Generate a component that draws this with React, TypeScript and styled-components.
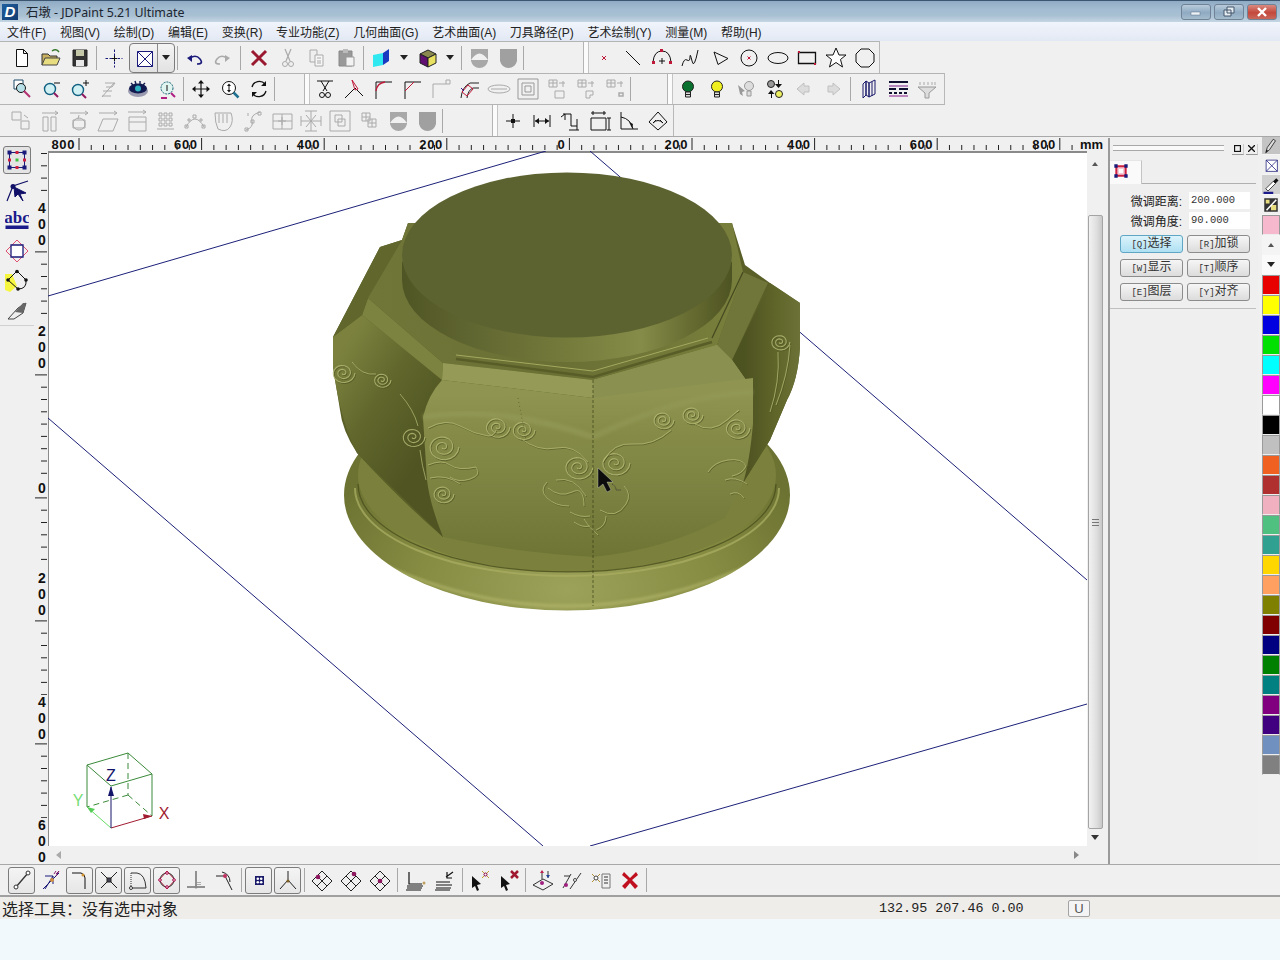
import React from 'react';
import styled, { createGlobalStyle, css } from 'styled-components';

const Global = createGlobalStyle`
  html, body { margin: 0; padding: 0; background: #f2f9fd; }
  #root { width: 1280px; height: 960px; overflow: hidden; }
`;
const UI = `"Liberation Sans", "Noto Sans CJK SC", sans-serif`;
const MONO = `"Liberation Mono", "Noto Sans CJK SC", monospace`;

const Page = styled.div`
  width: 1280px; height: 960px; display: flex; flex-direction: column; font-family: ${UI}; color: #222; background: #f2f9fd;
`;
const TitleBar = styled.div`
  height: 22px; box-sizing: border-box; border-top: 1px solid #3c5672; display: flex; align-items: center; flex: none;
  background: linear-gradient(#8fabc4 0%, #a3bcd1 40%, #a9c0d3 70%, #c4d6e3 100%);
`;
const Logo = styled.span`
  width: 16px; height: 16px; margin-left: 2px; background: linear-gradient(135deg, #1f5f9e, #123a70); color: #fff;
  font: italic bold 15px/16px "Liberation Sans", sans-serif; text-align: center; flex: none;
`;
const TitleText = styled.span`
  margin-left: 8px; font: 12.4px "Noto Sans", "Noto Sans CJK SC", sans-serif; color: #1c2530;
`;
const WinButtons = styled.div`
  margin-left: auto; margin-right: 3px; display: flex; gap: 3px;
`;
const WinBtn = styled.div<{ $close?: boolean }>`
  width: 30px; height: 16px; border: 1px solid #6f8296; border-radius: 3px; box-sizing: border-box;
  display: flex; align-items: center; justify-content: center;
  background: ${p => p.$close ? 'linear-gradient(#d98a80, #c4483c 55%, #c9685c)' : 'linear-gradient(#b8cbdb, #8faac2 55%, #a5bccd)'};
`;
const MenuBar = styled.div`
  height: 19px; flex: none; display: flex; align-items: center; padding-left: 7px; gap: 13.7px; font-size: 12px; color: #222;
  background: linear-gradient(#f0f4fb, #e3e9f4);
`;
const MenuItem = styled.span` white-space: nowrap; `;

const Toolbar = styled.div<{ $width: number; $h: number; $top?: boolean; $bottom?: boolean; $pad?: number }>`
  width: ${p => p.$width}px; height: ${p => p.$h}px; box-sizing: border-box; flex: none; display: flex; align-items: center;
  padding-left: ${p => p.$pad ?? 7}px; background: #f0f0f0;
  border-right: 1px solid #b8b8b8;
  ${p => p.$top && 'border-top: 1px solid #b4b4b4;'}
  ${p => p.$bottom && 'border-bottom: 1px solid #b4b4b4;'}
`;
const ToolbarTrack = styled.div` background: #f0f0f0; flex: none; `;
const ToolBtn = styled.div<{ $on?: boolean; $w?: number }>`
  width: ${p => (p.$w ?? 29) - 2}px; height: 27px; margin: 0 1px; box-sizing: border-box; flex: none;
  display: flex; align-items: center; justify-content: center; border-radius: 3px; border: 1px solid transparent;
  ${p => p.$on && css`background: linear-gradient(#f4f4f4, #e6e6e6); border-color: #7c7c7c;`}
`;
const Combo = styled.div`
  display: flex; width: 46px; height: 30px; margin-left: 1px; flex: none; box-sizing: border-box; border: 1px solid #7c7c7c; border-radius: 4px;
  background: linear-gradient(#f4f4f4, #e2e2e2); align-items: center;
`;
const ComboMain = styled.div`
  width: 27px; height: 100%; display: flex; align-items: center; justify-content: center; border-right: 1px solid #8a8a8a; flex: none;
`;
const ComboDrop = styled.div` flex: 1; display: flex; align-items: center; justify-content: center; `;
const Arrow = styled.span<{ $c?: string }>`
  width: 0; height: 0; border-left: 4px solid transparent; border-right: 4px solid transparent; border-top: 5px solid ${p => p.$c ?? '#222'};
`;
const DropCell = styled.div<{ $w: number }>`
  width: ${p => p.$w}px; display: flex; justify-content: center; flex: none;
`;
const Sep = styled.div<{ $w?: number }>`
  width: ${p => p.$w ?? 5}px; height: 24px; flex: none; display: flex; justify-content: center;
  &::before { content: ''; width: 1px; height: 100%; background: #a8a8a8; }
`;
const Gap = styled.div<{ $w: number }>` width: ${p => p.$w}px; flex: none; `;
const Grip = styled.div`
  width: 6px; height: 100%; flex: none; box-sizing: border-box; border-left: 1px solid #b4b4b4; border-right: 1px solid #c4c4c4; background: #fbfbfb;
`;

const Workspace = styled.div`
  height: 728px; box-sizing: border-box; flex: none; display: flex; background: #f0f0f0; border-top: 1px solid #a8a8a8;
`;
const LeftStrip = styled.div`
  width: 34px; flex: none; display: flex; flex-direction: column;
`;
const LeftTools = styled.div`
  padding-top: 8px; display: flex; flex-direction: column; align-items: center; border-bottom: 1px solid #d0d0d0;
  height: 180px; box-sizing: content-box;
`;
const LeftTool = styled.div<{ $on?: boolean }>`
  width: 28px; height: 30px; box-sizing: border-box; display: flex; align-items: center; justify-content: center; flex: none; border-radius: 3px; border: 1px solid transparent;
  ${p => p.$on && css`background: #e4e4e4; border-color: #7c7c7c; height: 28px; margin-bottom: 2px; margin-top: 1px;`}
`;
const ViewGrid = styled.div`
  width: 1074px; flex: none; display: grid; grid-template-columns: 14px 1039px 16px 5px; grid-template-rows: 14px 695px 18px;
`;
const HRulerCell = styled.div` grid-column: 2 / 5; grid-row: 1; overflow: hidden; `;
const VRulerCell = styled.div` grid-column: 1; grid-row: 2 / 4; overflow: hidden; `;
const Canvas = styled.div`
  grid-column: 2; grid-row: 2; background: #fff; box-shadow: inset 1px 2px 0 #8a8a8a; overflow: hidden;
`;
const VScroll = styled.div`
  grid-column: 3; grid-row: 2; display: flex; flex-direction: column; align-items: center;
`;
const ScrollCap = styled.div<{ $h: number }>`
  height: ${p => p.$h}px; flex: none; display: flex; align-items: center; justify-content: center; width: 100%;
`;
const ThumbTrack = styled.div` height: 39px; flex: none; `;
const UpArrow = styled.span`
  width: 0; height: 0; border-left: 3px solid transparent; border-right: 3px solid transparent; border-bottom: 4px solid #555;
`;
const Thumb = styled.div`
  width: 15px; height: 614px; flex: none; box-sizing: border-box; border: 1px solid #a4a4a4; border-radius: 2px;
  background: linear-gradient(90deg, #f2f2f2, #dedede 60%, #c8c8c8); display: flex; align-items: center; justify-content: center;
`;
const ThumbGrip = styled.div`
  width: 7px; height: 7px; background: repeating-linear-gradient(#777 0 1px, transparent 1px 3px);
`;
const HScroll = styled.div`
  grid-column: 2; grid-row: 3; display: flex; align-items: center; justify-content: space-between; padding: 0 8px; box-sizing: border-box; height: 18px;
`;
const LeftArrow = styled.span`
  width: 0; height: 0; border-top: 4px solid transparent; border-bottom: 4px solid transparent; border-right: 5px solid #aaa;
`;
const RightArrow = styled.span`
  width: 0; height: 0; border-top: 4px solid transparent; border-bottom: 4px solid transparent; border-left: 5px solid #888;
`;

const Panel = styled.div`
  width: 150px; flex: none; box-sizing: border-box; border-left: 2px solid #9a9a9a; background: #efefef; display: flex; flex-direction: column; margin-top: 1px;
`;
const PanelHead = styled.div`
  height: 22px; flex: none; display: flex; align-items: center; padding-left: 3px;
`;
const PanelGrip = styled.div`
  width: 111px; height: 4px; margin-top: -2px; border-top: 1px solid #a8a8a8; border-bottom: 1px solid #a8a8a8; background: #fafafa; flex: none;
`;
const MiniBtn = styled.span<{ $ml: number }>`
  margin-left: ${p => p.$ml}px; width: 11px; height: 10px; display: flex; align-items: center; justify-content: center; flex: none; border-bottom: 1px solid #999; border-right: 1px solid #ccc;
`;
const TabRow = styled.div`
  height: 23px; flex: none; display: flex; border-bottom: 1px solid #b0b0b0; margin-right: 2px;
`;
const Tab = styled.div`
  width: 32px; height: 24px; background: #fafafa; display: flex; align-items: flex-start; padding: 2px 0 0 3px; box-sizing: border-box; border-right: 1px solid #c4c4c4; border-top: 1px solid #e6e6e6;
`;
const FieldList = styled.div`
  padding-top: 8px; display: flex; flex-direction: column; gap: 3px;
`;
const Field = styled.div` display: flex; align-items: center; height: 17px; `;
const FieldLabel = styled.label`
  width: 72px; margin-right: 7px; text-align: right; font-size: 12px; color: #222; white-space: nowrap; flex: none;
`;
const FieldInput = styled.div`
  width: 61px; height: 17px; box-sizing: border-box; background: #fff; font: 10.5px/16px ${MONO}; padding-left: 2px; color: #333;
`;
const BtnGrid = styled.div`
  margin: 6px 0 0 10px; display: grid; grid-template-columns: 63px 63px; column-gap: 4px; row-gap: 6px; padding-bottom: 7px;
`;
const PanelBtn = styled.div<{ $on?: boolean }>`
  height: 18px; box-sizing: border-box; border: 1px solid ${p => p.$on ? '#5fa6c4' : '#8c8c8c'}; border-radius: 3px; font: 12px/16px ${MONO}; text-align: center; color: #333;
  background: ${p => p.$on ? 'linear-gradient(#dcf3fb, #aee0f3)' : 'linear-gradient(#f6f6f6, #dcdcdc)'};
  white-space: nowrap;
`;
const BtnKey = styled.span` font-size: 9px; `;
const PanelRule = styled.div` height: 1px; background: #c0c0c0; margin-right: 2px; `;
const Palette = styled.div`
  width: 22px; flex: none; display: flex; flex-direction: column; align-items: flex-end;
`;
const PalTool = styled.div<{ $h?: number; $bg?: string }>`
  width: 18px; height: ${p => p.$h ?? 20}px; flex: none; display: flex; align-items: center; justify-content: center; box-sizing: border-box; background: ${p => p.$bg ?? 'transparent'}; border-bottom: 1px solid #f5f5f5;
`;
const Swatch = styled.div<{ $c: string }>`
  width: 18px; height: 20px; flex: none; box-sizing: border-box; background: ${p => p.$c}; border: 1px solid #9a9a9a; border-bottom-color: #eee;
`;
const BottomBar = styled.div`
  height: 33px; flex: none; box-sizing: border-box; display: flex; align-items: center; padding-left: 7px; background: #f0f0f0; border-top: 1px solid #a8a8a8; border-bottom: 2px solid #a0a0a0;
`;
const StatusBar = styled.div`
  height: 22px; flex: none; display: flex; align-items: center; background: #efedea; font-size: 15px; color: #222;
`;
const StatusText = styled.span` width: 879px; padding-left: 2px; box-sizing: border-box; font-size: 16px; flex: none; white-space: nowrap; `;
const Coords = styled.span` width: 189px; flex: none; font: 13.4px ${MONO}; color: #222; white-space: pre; `;
const UBtn = styled.span`
  width: 22px; height: 17px; box-sizing: border-box; border: 1px solid #a4a4a4; border-radius: 2px; font: 13px/15px ${UI}; text-align: center; color: #555; background: #f4f4f4;
`;

const NV = '#1a1a7a', BK = '#111', RD = '#c01838', GY = '#aaa', GD = '#999';

const L = (p: string, c = BK, w = 1) => <path d={p} fill="none" stroke={c} strokeWidth={w} />;

const ICONS: Record<string, React.ReactNode> = {
  new: <path d="M6.5 3.5h7l4 4v13h-11zM13.5 3.5v4h4" fill="#fff" stroke={BK} />,
  open: <><path d="M3 19V8h6l2 2h7v3" fill="#c8b060" stroke="#333" /><path d="M3 19l3-7h15l-3 7z" fill="#e8dc80" stroke="#444" /><path d="M13 5q4-3 7 1" stroke="#3a7a30" strokeWidth="1.5" fill="none" /></>,
  save: <><path d="M5 4h14v16H5z" fill="#333" stroke="#222" /><path d="M8 4h8v6H8z" fill="#c4c8a8" /><path d="M8 14h8v6H8z" fill="#e8e8e8" /></>,
  cross: <><path d="M3.500 12.500h17M12.500 3.500v18" stroke={NV} strokeDasharray="2.500 1.500" fill="none" /><path d="M10 12.500h5M12.500 10v5" stroke={BK} /></>,
  boxx: <><path d="M5.5 5.5h15v15h-15z" fill="#fff" stroke={NV} />{L('M5.5 5.5l15 15M20.5 5.5l-15 15', NV)}</>,
  undo: <>{L('M8 12q6-4 10 1t-3 5', NV, 1.6)}<path d="M5 12l5-3v7z" fill={NV} /></>,
  redo: <>{L('M16 12q-6-4-10 1t3 5', GY, 1.6)}<path d="M19 12l-5-3v7z" fill={GY} /></>,
  del: <path d="M5 5l14 14M19 5L5 19" stroke="#9a1830" strokeWidth="3" />,
  cut: <>{L('M9 3l5 12M15 3l-5 12', GY, 1.2)}<circle cx="9" cy="18" r="2.5" fill="none" stroke={GY} /><circle cx="15" cy="18" r="2.5" fill="none" stroke={GY} /></>,
  copy: <><path d="M5 4h7v12H5z" fill="#eee" stroke={GY} /><path d="M10 9h8v11h-8z" fill="#f6f6f6" stroke={GY} />{L('M12 12h4M12 15h4M12 17h4', GY)}</>,
  paste: <><path d="M5 5h13v15H5z" fill="#999" stroke="#888" /><path d="M9 3h5v4H9z" fill="#bbb" /><path d="M12 11h8v9h-8z" fill="#f2f2f2" stroke="#999" /></>,
  cube: <><path d="M4 9l10-2v12l-10 2z" fill="#30e8f0" /><path d="M14 7l6-4v12l-6 4z" fill="#1a3ac0" /></>,
  ccube: <><path d="M4 8l8-4 8 4-8 4z" fill="#8a8a50" stroke="#222" /><path d="M4 8l8 4v9l-8-4z" fill="#601070" stroke="#222" /><path d="M12 12l8-4v9l-8 4z" fill="#e8e060" stroke="#222" /></>,
  sh1: <><path d="M4 3h17v12q-2 7-8.500 7T4 15z" fill="#a8a8a8" /><path d="M4 14q8.500-13 17 0" fill="#f0f0f0" /></>,
  sh2: <path d="M4 3h17v12q-2 7-8.500 7T4 15z" fill="#a0a0a0" />,
  pt: <path d="M10 10l4 4M14 10l-4 4" stroke={RD} />,
  line: L('M5 5l14 14', BK),
  arc: <>{L('M3 16q1-11 9-11t9 11', BK)}{L('M9 15h6M12 12v6', BK)}<path d="M2 15h3v3H2zM19 15h3v3h-3zM10 3h3v3h-3z" fill={RD} /></>,
  curve: L('M3 20q2-8 5-6t3-3 2 4 6-11', BK),
  poly: L('M6 6l14 6.500-10 6z', BK),
  circle: <><circle cx="12" cy="12" r="8" fill="none" stroke={BK} /><path d="M10.500 10.500l3 3M13.500 10.500l-3 3" stroke={RD} /></>,
  oval: <ellipse cx="12" cy="12" rx="10" ry="5.500" fill="none" stroke={BK} />,
  rect: <><path d="M3.500 6.500h17v11h-17z" fill="none" stroke={BK} strokeWidth="1.300" /><path d="M3 5h2v2H3zM19 17h2v2h-2z" fill={RD} /></>,
  star: <path d="M12 2l3 7h7l-5.500 4.500L18.500 21 12 16.500 5.500 21l2-7.500L2 9h7z" fill="#fff" stroke={BK} />,
  octa: <path d="M8 3h8l5 5v8l-5 5H8l-5-5V8z" fill="none" stroke={BK} />,
  zwin: <><path d="M4 3h9v9H4z" fill="#fff" stroke="#1a4a6a" /><circle cx="11" cy="11" r="4.500" fill="#b8e0e8" stroke={BK} />{L('M14 14l6 6', '#b03070', 2)}</>,
  zmin: <><circle cx="11" cy="12" r="5.500" fill="#d0f0f4" stroke="#106080" strokeWidth="1.400" />{L('M15 16l4 4', '#901a60', 2)}{L('M15 6h6', BK)}</>,
  zplus: <><circle cx="10" cy="13" r="5.500" fill="#d0f0f4" stroke="#106080" strokeWidth="1.400" />{L('M14 17l4 4', '#901a60', 2)}{L('M15 6h6M18 3v6', BK)}</>,
  zhatch: <>{L('M5 20l12-14M8 6h10l-3 4H9M6 14h9M5 19h9', GY)}</>,
  eye: <><ellipse cx="12" cy="14" rx="10" ry="6" fill="#9a9ab0" /><ellipse cx="12" cy="11.500" rx="9" ry="5" fill="#101a50" /><circle cx="12" cy="11.500" r="3" fill="#30b0c0" />{L('M5 6l2 2M9 4l1 3M14 4l0 3M19 6l-2 2', '#101a50', 1.400)}</>,
  zprev: <><circle cx="12" cy="11" r="6" fill="#e0f4f0" stroke="#106070" strokeDasharray="2 1" />{L('M12 8v6', BK)}{L('M6 21h6M16 16l4 4', '#b02080', 2)}</>,
  move: <>{L('M12 4v16M4 12h16', BK, 1.200)}<path d="M12 3l-3 3.500h6zM12 21l-3-3.500h6zM3 12l3.500-3v6zM21 12l-3.500-3v6z" fill={BK} /></>,
  zfit: <><circle cx="11" cy="11" r="6.500" fill="#fff" stroke={BK} />{L('M15.500 15.500l5 5', '#207090', 2.500)}{L('M11 8v6', BK)}<path d="M11 6.500l-2 2.500h4zM11 15.500l-2-2.500h4z" fill={BK} /></>,
  rot: <>{L('M5 10a7.500 7.500 0 0 1 13-3M19 14a7.500 7.500 0 0 1-13 3', BK, 1.300)}<path d="M19 4v5h-5zM5 20v-5h5z" fill={BK} /></>,
  trim: <>{L('M4 4h16', BK)}{L('M8 4l6 10M16 4l-6 10', BK)}<circle cx="9" cy="18" r="2.500" fill="none" stroke={BK} /><circle cx="15" cy="18" r="2.500" fill="none" stroke={BK} /></>,
  ext: <>{L('M3 21L13 11l8 8', BK)}<path d="M10 3l6 9-3 1z" fill="none" stroke={RD} /></>,
  fillet: <>{L('M5 22V5h16', BK)}{L('M5 14q1-8 9-9', RD, 1.300)}</>,
  chamfer: <>{L('M5 22V5h16', BK)}{L('M5 14l9-9', RD)}</>,
  corner: <>{L('M4 21V7h13', GY)}{L('M17 7V3h4v4h-4', GY)}</>,
  offcurve: <>{L('M3 21q1-11 9-15h9M9 21q1-8 6-10h6', '#222')}<path d="M4 15l6-7 5 4-6 7z" fill="none" stroke={RD} /><path d="M3 11l3 3" stroke="#40108a" /></>,
  slot: <><ellipse cx="12" cy="12" rx="11" ry="4" fill="none" stroke={GY} /><path d="M4 12h16" stroke={GY} /></>,
  frame: <><path d="M2 2h20v20H2z" fill="none" stroke={GD} /><path d="M6 6h12v12H6zM9 9h6v6H9z" fill="none" stroke={GD} /></>,
  g1: <>{L('M4 3h8v7H4zM8 3v7M4 6h8M14 6h6M18 4v6', GY)}{L('M10 14h9v7h-9z', GY)}</>,
  g2: <>{L('M4 3h8v7H4zM8 3v7M4 6h8M14 6h6M18 4v6', GY)}{L('M12 14h7v4h-3v3h-4z', GY)}</>,
  g3: <>{L('M4 3h8v7H4zM8 3v7M4 6h8M14 6h6M18 4v6', GY)}<path d="M16 16h4v3h-4z" fill="none" stroke={GY} strokeWidth="1.500" /></>,
  bulbG: <><circle cx="12" cy="9.500" r="5.500" fill="#0a7030" stroke="#222" /><path d="M9.500 15h5v5h-5z" fill="#ddd" stroke="#222" />{L('M9.500 17.500h5', '#222')}</>,
  bulbY: <><circle cx="12" cy="9.500" r="5.500" fill="#f0f020" stroke="#222" /><path d="M9.500 15h5v5h-5z" fill="#ddd" stroke="#222" />{L('M9.500 17.500h5', '#222')}</>,
  bulbC: <><circle cx="15" cy="9" r="4.500" fill="#ddd" stroke={GD} /><path d="M13 14h4v5h-4z" fill="#ddd" stroke={GD} /><path d="M4 8l7 6-3 1 1 4-3-2z" fill={GD} /></>,
  bulbs: <><circle cx="8" cy="7" r="3.500" fill="#999" stroke="#222" /><circle cx="16" cy="17" r="3.500" fill="#eef060" stroke="#222" /><path d="M16 3v4h3l-3.500 4-3.500-4h3V3z" fill="#111" /><path d="M8 21v-4H5l3-4 3.500 4H9v4z" fill="#111" /></>,
  arrL: <path d="M5 12l7-6v3h5v6h-5v3z" fill="#dcdcdc" stroke="#c0c0c0" />,
  arrR: <path d="M19 12l-7-6v3H7v6h5v3z" fill="#dcdcdc" stroke="#c0c0c0" />,
  book: <>{L('M6 7l3-3v14l-3 3zM9 4l3 2v14l-3-2zM12 6l6-3v14l-6 3zM15 5v14', '#18186a', 1)}</>,
  layers: <>{L('M3 5h19', '#101030', 2)}{L('M3 9h19', '#7a1a8a', 1)}{L('M3 12h7M13 12h9', '#101030', 2)}{L('M3 16h3M8 16h3M13 16h3M18 16h3', '#101030', 2)}{L('M3 19h19', '#8a1a8a', 1)}</>,
  funnel: <>{L('M5 5v3M9 5v3M13 5v3M17 5v3M20 5v3', GY)}<path d="M3 10h18l-7 6v5h-4v-5z" fill="#ddd" stroke={GD} /></>,
  r1: <>{L('M3 3h9v8H3zM12 12h8v8h-8z', GY)}{L('M15 6l4 3', GY)}</>,
  r2: <>{L('M5 8h5v14H5zM13 8h5v14h-5zM4 4h16M17 2l3 2-3 2', GY)}</>,
  r3: <>{L('M6 11h12v8H6zM3 4h18M18 2l3 2-3 2M12 6l-1 4', GY)}<circle cx="12" cy="15" r="6" fill="none" stroke={GY} /></>,
  r4: <>{L('M7 10h15l-5 12H2zM3 4h18M18 2l3 2-3 2', GY)}</>,
  r5: <>{L('M4 8h17v14H4zM4 13h17M3 3h18M18 1l3 2-3 2', GY)}</>,
  r6: <path d="M5 4h3v3H5zM10 4h3v3h-3zM15 4h3v3h-3zM5 9h3v3H5zM10 9h3v3h-3zM15 9h3v3h-3zM5 14h3v3H5zM10 14h3v3h-3zM15 14h3v3h-3zM3 20h17" fill="none" stroke={GY} />,
  r7: <>{L('M3 18q9-16 18 0', GY)}<path d="M2 16h3v3H2zM19 16h3v3h-3zM10 6h3v3h-3zM5 10h2v2H5zM17 10h2v2h-2z" fill="none" stroke={GY} /></>,
  r8: <>{L('M3 4h16q3 8-1 14t-12 2q-3-6-3-16M7 5v9M11 5v9M15 5v9', GY)}</>,
  r9: <>{L('M5 21q8-3 6-9t8-9M7 4v3', GY)}<path d="M4 19h3v3H4zM10 11h3v3h-3zM17 3h3v3h-3z" fill="none" stroke={GY} /></>,
  r10: <>{L('M3 5h19v15H3zM12 5v15M3 12h19M8 12h8M12 8v8', GY)}</>,
  r11: <>{L('M6 2h12M6 22h12M12 2v20M2 12h20M7 6l10 12M17 6L7 18M2 7v10M22 7v10', GY)}</>,
  r12: <>{L('M2 2h20v20H2zM7 6h7v7H7zM10 10h7v7h-7z', GY)}</>,
  r13: <>{L('M5 4h8v8H5zM11 10h8v8h-8zM9 4v8M5 8h8M15 10v8M11 14h8', GY)}</>,
  selQ: <><path d="M4.500 4.500h15v15h-15z" fill="none" stroke={NV} /><path d="M2.500 2.500h4v4h-4zM17.500 2.500h4v4h-4zM2.500 17.500h4v4h-4zM17.500 17.500h4v4h-4z" fill={NV} /><path d="M10.500 3h3v3h-3zM10.500 18h3v3h-3zM3 10.500h3v3H3zM18 10.500h3v3h-3z" fill="#d02040" /><path d="M10.500 10.500h3v3h-3z" fill="#40c040" /></>,
  selT: <><path d="M5 5h14v14H5z" fill="#f4c8d4" stroke="#d02040" strokeWidth="3" /><path d="M2 2h5v5H2zM17 2h5v5h-5zM2 17h5v5H2zM17 17h5v5h-5z" fill={NV} /><path d="M9 9h6v6H9z" fill="#fff" /></>,
  node: <>{L('M23 2L8 7 2 22', '#101068', 1.200)}<circle cx="8" cy="7.500" r="2.500" fill="#101068" /><path d="M9 8l12 6-6 1 3 7-5-7-3 3z" fill="#101068" stroke="#101068" /></>,
  abc: <><text x="12" y="14" textAnchor="middle" fontFamily="Liberation Serif" fontWeight="700" fontSize="17" fill="#1a1a8a" stroke="none">abc</text><rect x="0.500" y="16.500" width="23" height="3.500" fill="#1a1a8a" /></>,
  shape: <><path d="M12 1l11 11-11 11L1 12z" fill="none" stroke="#e05070" /><path d="M6 6h12v12H6z" fill="#fff" stroke="#1a1a7a" strokeWidth="1.300" /></>,
  node2: <><path d="M0 5l7 0 5 12-7 6-5-2z" fill="#f6f640" /><path d="M3 11L12 2l9 9q1 9-8 9z" fill="none" stroke="#111" /><circle cx="3" cy="11" r="1.800" fill="#111" /><circle cx="12" cy="2.500" r="1.800" fill="#111" /><circle cx="21" cy="11" r="1.800" fill="#111" /><circle cx="13" cy="20" r="1.800" fill="#111" /></>,
  eraser: <><path d="M3 20l10-11 8-5-3 10-9 6z" fill="#eee" stroke="#444" /><path d="M10 13l8-9 3 0-3 10z" fill="#666" /></>,
  endp: <>{L('M6 19L18 5', '#333', 1.300)}<circle cx="6" cy="19" r="2" fill="#fff" stroke="#333" /><circle cx="18" cy="5" r="2" fill="#fff" stroke="#333" /></>,
  mid: <>{L('M4 21L20 5', NV)}{L('M6 8h8l-8 13M14 8v8', NV)}<circle cx="13" cy="12" r="2" fill="#d09040" /><path d="M17 3l-2 3M20 3l-3 3M17 8l3-5" stroke="#802070" /></>,
  near: <>{L('M4 5h9q4 1 4 5v11', BK)}<circle cx="15" cy="7" r="1.500" fill="#d09030" /></>,
  inter: <>{L('M4 4l16 16M20 4L4 20', '#222')}<path d="M10 10h4v4h-4z" fill="#445" stroke="#222" /></>,
  quad: <>{L('M5 5h6q8 1 9 15H5', '#333')}<path d="M5 5v15" stroke="#333" strokeDasharray="1 1" /><circle cx="5" cy="20" r="1.500" fill="#fff" stroke="#333" /></>,
  circ: <><path d="M12 3l8 9-8 9-8-9z" fill="none" stroke={RD} /><circle cx="12" cy="12" r="7" fill="none" stroke="#333" /><circle cx="12" cy="5" r="1.300" fill="#fff" stroke="#a04" /><circle cx="19" cy="12" r="1.300" fill="#fff" stroke="#a04" /><circle cx="12" cy="19" r="1.300" fill="#fff" stroke="#a04" /><circle cx="5" cy="12" r="1.300" fill="#fff" stroke="#a04" /></>,
  perp: <>{L('M3 19h18M12 3v16', '#333')}<path d="M14 14v3M16 14v3" stroke="#666" strokeDasharray="1 1" /><circle cx="12" cy="19" r="1.500" fill="#888" /></>,
  tan: <>{L('M3 8l9 0 7 14M9 4q8 2 8 10', '#222')}<circle cx="12" cy="8" r="2" fill="#c03060" /></>,
  dot: <><path d="M8 8h9v9H8z" fill="#1a1a6a" /><circle cx="10.800" cy="10.800" r="1.300" fill="#fff" /><circle cx="14.200" cy="14.200" r="1.300" fill="#fff" /><circle cx="14.200" cy="10.800" r="1.300" fill="#fff" /><circle cx="10.800" cy="14.200" r="1.300" fill="#fff" /></>,
  axes: <>{L('M12 12V3M12 12L4 21M12 12l8 9', '#222')}<circle cx="12" cy="13" r="1.500" fill="#806020" /></>,
  dia1: <>{L('M12 3l10 10-10 10L2 13z M7 8l10 10M17 8L7 18', '#222')}<circle cx="8" cy="9" r="2.300" fill="#901860" /></>,
  dia2: <>{L('M12 3l10 10-10 10L2 13z M7 8l10 10M17 8L7 18', '#222')}<circle cx="15" cy="6" r="2.300" fill="#901860" /></>,
  dia3: <>{L('M12 3l10 10-10 10L2 13z M7 8l10 10M17 8L7 18', '#222')}<circle cx="12" cy="13" r="2.300" fill="#901860" /></>,
  stk1: <>{L('M5 4v12h13M3 18h16M3 20h15M2 22h15', '#111', 1.200)}<circle cx="20" cy="15" r="1.500" fill="#c0a060" /></>,
  stk2: <>{L('M3 14h14M3 17h16M3 20h15M2 22h15M13 9l7-5M14 4v6h5', '#111', 1.200)}</>,
  ptr1: <><path d="M4 8l9 8-4 1 2 5-2 1-2-5-3 2z" fill="#111" /><path d="M14 3l7 7M21 3l-7 7" stroke="#c0a030" /><circle cx="17.500" cy="6.500" r="1.500" fill="#fff" stroke="#804" /></>,
  ptr2: <><path d="M4 8l9 8-4 1 2 5-2 1-2-5-3 2z" fill="#111" /><path d="M14 3l7 7M21 3l-7 7" stroke="#a01830" strokeWidth="2.500" /></>,
  pl1: <>{L('M2 17l10-6 10 5-10 6zM11 3v8M17 3v7', '#333')}<circle cx="11" cy="15" r="2" fill="#a02080" /><path d="M9 5l2-3 2 3z" fill="#c02050" /><path d="M15 7l2 3 2-3z" fill="#2040a0" /></>,
  pl2: <>{L('M3 20l8-14M10 21L21 5M4 8h6', '#333')}<circle cx="6" cy="17" r="2" fill="#a02080" /><circle cx="15" cy="12" r="1.500" fill="#fff" stroke="#444" /></>,
  pl3: <>{L('M3 6l8 8M11 6l-8 8', '#b09030')}<circle cx="7" cy="10" r="2" fill="#fff" stroke="#444" /><path d="M13 6h8v14h-8z" fill="#f0f0f0" stroke="#777" />{L('M15 9h4M15 12h4M15 15h4', '#333')}</>,
  xr: <path d="M6 4l6 6 6-6 2 3-6 5 6 6-3 3-5-6-5 6-3-3 6-6-6-5z" fill="#c01020" />,
  pen: <><path d="M5 21l2-7L15 3l3 2-8 12z" fill="#ddd" stroke="#111" /><path d="M5 21l1-4 2 1z" fill="#111" /></>,
  dropper: <><path d="M5 17L15 7l3 3-10 10z" fill="#fff" stroke="#111" /><path d="M15 7l4-4 3 3-4 4z" fill="#111" /><path d="M2 21h13v3H2z" fill="#1a1a8a" /></>,
  pattern: <><path d="M3 3h18v18H3z" fill="#333" /><path d="M5 5h5v5H5zM12 12h7v7h-7z" fill="#e8dc80" /><path d="M6 19L19 5" stroke="#fff" strokeWidth="2" /></>,
  dim1: <>{L('M12 5v14M5 12h14', BK)}<path d="M10 10h4v4h-4z" fill={BK} /></>,
  dim2: <>{L('M4 6v12M20 6v12M5 12h14', BK)}<path d="M5 12l4-3v6zM19 12l-4-3v6z" fill={BK} /></>,
  dim3: <>{L('M4 5h8v12h6M2 8l4-3 0 6M10 21h10M18 10v11', BK)}</>,
  dim4: <>{L('M3 9h15v12H3zM3 4h15M5 2v4M16 2v4M21 9v12M19 9h4M19 21h4', BK)}</>,
  dim5: <>{L('M4 3v17h17M4 8q10 2 12 12', BK)}<path d="M12 13l4 2-1 4z" fill={BK} /></>,
  dim6: <><path d="M12 3l9 10-9 8-9-8z" fill="none" stroke={BK} /><path d="M7 14q5-5 10 0" fill="none" stroke={BK} /><path d="M7 14l3-3M17 14l-3-3" stroke={BK} /></>,
};

const Ico = ({ n, s = 24 }: { n: string; s?: number }) => (
  <svg width={s} height={s} viewBox="0 0 24 24">{ICONS[n]}</svg>
);
const T = ({ n, on }: { n: string; on?: boolean }) => <ToolBtn $on={on}><Ico n={n} /></ToolBtn>;
const Tools = ({ list }: { list: string }) => <>{list.split(' ').map((n, i) => <T key={i} n={n} />)}</>;

const MENUS = ['文件(F)', '视图(V)', '绘制(D)', '编辑(E)', '变换(R)', '专业功能(Z)', '几何曲面(G)', '艺术曲面(A)', '刀具路径(P)', '艺术绘制(Y)', '测量(M)', '帮助(H)'];
const COLORS = ['#e80000', '#ffff00', '#0000e0', '#00e000', '#00ffff', '#ff00ff', '#ffffff', '#000000', '#c0c0c0', '#f06020', '#b03030', '#f0b0c0', '#50c080', '#30a090', '#ffd700', '#ffa060', '#808000', '#800000', '#000080', '#008000', '#008080', '#800080', '#400080', '#7090c0', '#808080'];

const HRuler = () => {
  const ticks: React.ReactNode[] = [];
  for (let i = 0; i < 83; i++) {
    const x = 31 + i * 12.26;
    const major = i % 10 === 0;
    ticks.push(<line key={i} x1={x} x2={x} y1={major ? 1 : 8} y2={13} stroke="#222" />);
  }
  const labels = ['800', '600', '400', '200', '0', '200', '400', '600', '800'];
  return (
    <svg width={1060} height={14}>
      {ticks}
      {labels.map((t, i) => (
        <text key={i} x={27 + i * 122.6} y={12} textAnchor="end" fontFamily="Liberation Sans" fontWeight="700" fontSize="13" letterSpacing="0.6" fill="#111">{t}</text>
      ))}
      <rect x={1030} y={0} width={30} height={14} fill="#f0f0f0" />
      <text x={1032} y={12} fontFamily="Liberation Sans" fontWeight="700" fontSize="13" fill="#111">mm</text>
    </svg>
  );
};
const VRuler = () => {
  const ticks: React.ReactNode[] = [];
  for (let i = 0; i < 60; i++) {
    const y = 2 + i * 12.3;
    const major = (i - 8) % 10 === 0;
    ticks.push(<line key={i} x1={major ? 1 : 7} x2={13} y1={y + 0.5} y2={y + 0.5} stroke="#222" />);
  }
  const groups: [string, number][] = [['400', 94], ['200', 217], ['0', 342], ['200', 464], ['400', 588], ['600', 711]];
  const cells = groups.flatMap(([t, y]) => t.split('').reverse().map((c, j) => ({ c, y: y - j * 16 })));
  return (
    <svg width={14} height={713}>
      {ticks}
      {cells.map((d, i) => <rect key={i} x={3} y={d.y - 12} width={10} height={15} fill="#f0f0f0" />)}
      {cells.map((d, i) => (
        <text key={i} x={8} y={d.y} textAnchor="middle" fontFamily="Liberation Sans" fontWeight="700" fontSize="14" fill="#111">{d.c}</text>
      ))}
    </svg>
  );
};

const spiral = (cx: number, cy: number, r: number, turns = 2.4, start = 0, dir = 1) => {
  let d = '';
  const n = Math.round(turns * 18);
  for (let i = 0; i <= n; i++) {
    const t = i / n;
    const a = start + dir * t * turns * Math.PI * 2;
    const rr = r * (1 - t) + 1;
    d += `${i ? 'L' : 'M'}${(cx + rr * Math.cos(a)).toFixed(1)} ${(cy + rr * 0.88 * Math.sin(a)).toFixed(1)}`;
  }
  return d;
};
const Emboss = ({ d, w = 1 }: { d: string; w?: number }) => (
  <>
    <path d={d} fill="none" stroke="#4f5422" strokeWidth={w} opacity="0.7" transform="translate(0.8 0.9)" />
    <path d={d} fill="none" stroke="#b8bd78" strokeWidth={w} opacity="0.8" />
  </>
);
const SPIRALS: [number, number, number][] = [[497, 427, 12], [523, 430, 11], [443, 447, 15], [578, 467, 14], [615, 463, 14], [663, 420, 10], [692, 415, 10], [737, 428, 12], [443, 494, 10], [343, 373, 11], [382, 380, 8], [413, 437, 11], [780, 342, 9]];
const CURVES = [
  'M428 428q18-10 32-2t28 10q6 0 8-6', 'M520 438q18 14 36 10t32 14', 'M603 462q10-20 30-18t38-14', 'M695 424q16 10 32-4t10-8',
  'M547 482q-8 8 0 16t22 8', 'M556 480q18-4 30 16', 'M548 488q12 10 24 4t12 14', 'M570 512q10 6 20 4M574 522q8 6 16 4', 'M598 535q-10-8-14-16',
  'M600 510q16 10 26-6q6-10-2-18', 'M596 530q10-4 10-14', 'M428 465q14-6 22 0t26 2q6 8-6 12t-20-2', 'M430 478q16-4 30 6',
  'M708 472q6-10 20-12t18 6q-4 8-14 10', 'M725 480q10-4 22 4', 'M730 494q8-4 14 4',
  'M352 362q10 14 24 12', 'M400 394q14 16 18 32', 'M420 450q2 16 6 30', 'M778 352q2 30-8 60', 'M790 345q-2 30-14 60',
];
const Scene = () => (
  <svg width={1039} height={695} viewBox="48 151 1039 695">
    <defs>
      <radialGradient id="base" gradientUnits="userSpaceOnUse" cx="567" cy="590" r="270" gradientTransform="matrix(1 0 0 0.62 0 224)">
        <stop offset="0" stopColor="#9da25a" /><stop offset="0.55" stopColor="#868c42" /><stop offset="1" stopColor="#6c7231" />
      </radialGradient>
      <linearGradient id="wall" gradientUnits="userSpaceOnUse" x1="400" y1="0" x2="735" y2="0">
        <stop offset="0" stopColor="#4f5424" /><stop offset="0.2" stopColor="#5f6530" /><stop offset="0.5" stopColor="#757b3b" /><stop offset="0.72" stopColor="#858b48" /><stop offset="0.9" stopColor="#5f652c" /><stop offset="1" stopColor="#4c5122" />
      </linearGradient>
      <linearGradient id="front" gradientUnits="userSpaceOnUse" x1="0" y1="395" x2="0" y2="560">
        <stop offset="0" stopColor="#8f9550" /><stop offset="0.25" stopColor="#858b47" /><stop offset="0.6" stopColor="#7b8140" /><stop offset="1" stopColor="#6e7434" />
      </linearGradient>
      <linearGradient id="leftSide" gradientUnits="userSpaceOnUse" x1="333" y1="360" x2="440" y2="430">
        <stop offset="0" stopColor="#7c823e" /><stop offset="0.5" stopColor="#5f652b" /><stop offset="1" stopColor="#4f5422" />
      </linearGradient>
      <linearGradient id="rightSide" gradientUnits="userSpaceOnUse" x1="745" y1="0" x2="805" y2="0">
        <stop offset="0" stopColor="#4d5221" /><stop offset="0.5" stopColor="#5f6529" /><stop offset="1" stopColor="#6f753a" />
      </linearGradient>
      <linearGradient id="ledge" gradientUnits="userSpaceOnUse" x1="370" y1="0" x2="760" y2="0">
        <stop offset="0" stopColor="#707638" /><stop offset="0.5" stopColor="#6a7034" /><stop offset="1" stopColor="#7a803c" />
      </linearGradient>
      <filter id="soft"><feGaussianBlur stdDeviation="1.600" /></filter>
      <clipPath id="baseClip"><ellipse cx="567" cy="495" rx="223" ry="115.500" /></clipPath>
    </defs>
    <g stroke="#1c2078" strokeWidth="1" fill="none">
      <path d="M48 296L546 151M590 151L1087 580M48 418L543 846M590 846L1087 704" />
    </g>
    <ellipse cx="567" cy="495" rx="223" ry="115.500" fill="url(#base)" />
    <g clipPath="url(#baseClip)">
      <path d="M372 560Q470 606 567 606T762 560" fill="none" stroke="#b2b76c" strokeWidth="3" filter="url(#soft)" opacity="0.8" />
    </g>
    <ellipse cx="567" cy="475" rx="209" ry="97" fill="#7b813c" />
    <path d="M355 488A212 88 0 0 0 779 488" fill="none" stroke="#a6ab60" strokeWidth="2" opacity="0.8" />
    <path d="M358 484A209 88 0 0 0 776 484" fill="none" stroke="#4a4f1e" strokeWidth="1.300" opacity="0.8" />

    <path d="M380 247L402 240L408 223L732 223L745 265L770 283L800 303L800 347Q798 380 787 400L770 440L743 483L600 400L443 537Q400 500 357 453Q342 430 340 410L333 367V337z" fill="#5a5f28" />
    <path d="M333 337L362 315L442 380L423 417L427 480L443 537L357 453Q340 420 333 367z" fill="url(#leftSide)" />
    <path d="M753 390L732 360L770 283L800 303V347Q798 380 787 400L770 440L743 483L753 423z" fill="url(#rightSide)" />
    <path d="M368 298L362 315L442 380L443 363z" fill="#7c8240" />
    <path d="M743 272L768 283L732 360L717 345z" fill="#70763a" />
    <path d="M333 337L362 315L368 298L402 240L380 247z" fill="#61672c" />
    <path d="M408 223L402 240L368 298L443 363L593 380L717 345L743 272L732 223z" fill="url(#ledge)" />
    <path d="M456 355L593 371L708 338" fill="none" stroke="#a4a95f" strokeWidth="1" />
    <path d="M456 359L593 377L712 342" fill="none" stroke="#585d28" strokeWidth="2.500" />
    <path d="M743 272L712 338" fill="none" stroke="#444920" strokeWidth="1.200" />
    <path d="M443 363L593 380L717 345L732 360L753 390L593 398L442 380z" fill="#959b56" />
    <path d="M593 380L717 345L732 360L753 390L593 398z" fill="#8a9050" />
    <path d="M442 380L593 398V557Q510 552 443 537Q430 505 427 480L423 417Q428 395 442 380z" fill="url(#front)" />
    <path d="M593 398L753 378V423Q750 460 743 483L725 518Q665 550 593 557z" fill="url(#front)" />
    <path d="M423 417Q500 405 593 437" fill="none" stroke="#949a58" strokeWidth="6" filter="url(#soft)" opacity="0.6" />
    <path d="M593 437Q680 395 753 392" fill="none" stroke="#949a58" strokeWidth="6" filter="url(#soft)" opacity="0.5" />

    <path d="M402 262V280A165 82 0 0 0 732 280V262z" fill="url(#wall)" />
    <ellipse cx="567" cy="255" rx="165" ry="82.500" fill="#5d6330" />

    <g>{SPIRALS.map(([x, y, r], i) => <Emboss key={i} d={spiral(x, y, r)} w={1.1} />)}</g>
    <g>{CURVES.map((d, i) => <Emboss key={i} d={d} w={0.9} />)}</g>
    <path d="M593 380V606" stroke="#3a3e18" strokeDasharray="3 2" fill="none" opacity="0.7" />
    <path d="M518 398L526 440" stroke="#3a3e18" strokeDasharray="1 3" fill="none" opacity="0.5" />

    <path d="M598 468V488L603 484L607 492L611 490L607 482H613z" fill="#0c0c0c" stroke="#fff" strokeWidth="0.300" />
    <path d="M612 484q4 2 4 6h5" stroke="#333" strokeDasharray="1 1" fill="none" />

    <g fill="none" stroke="#3a8a3a">
      <path d="M87 765L128 753L152 774L111 786zM87 765V807M152 774V816" />
      <path d="M128 753V795M128 795L87 807M128 795L152 816" strokeDasharray="6 4" />
    </g>
    <path d="M87 807L111 828" stroke="#66dd66" /><path d="M87 807l8 2-4 4z" fill="#55cc55" />
    <path d="M111 828L152 816" stroke="#a01a30" /><path d="M152 816l-9-2 1 5z" fill="#a01a30" />
    <path d="M111 828V787" stroke="#14146a" /><path d="M111 786l-3 10h6z" fill="#14146a" />
    <text x="111" y="781" textAnchor="middle" fontFamily="Liberation Sans" fontSize="16" fill="#14146a">Z</text>
    <text x="78" y="806" textAnchor="middle" fontFamily="Liberation Sans" fontSize="16" fill="#77dd77">Y</text>
    <text x="164" y="819" textAnchor="middle" fontFamily="Liberation Sans" fontSize="16" fill="#a01a30">X</text>
  </svg>
);

const BtnLabel = ({ k, t, on }: { k: string; t: string; on?: boolean }) => (
  <PanelBtn $on={on}><BtnKey>[{k}]</BtnKey>{t}</PanelBtn>
);

export default function App() {
  return (
    <Page>
      <Global />
      <TitleBar>
        <Logo>D</Logo>
        <TitleText>石墩 - JDPaint 5.21 Ultimate</TitleText>
        <WinButtons>
          <WinBtn><svg width="12" height="8"><rect x="1" y="4" width="9" height="3" fill="#eef3f7" stroke="#5d7186" strokeWidth="0.500" /></svg></WinBtn>
          <WinBtn><svg width="14" height="12"><path d="M5 1h7v6H5zM2 4h7v6H2z" fill="#e4ebf1" stroke="#44576b" /></svg></WinBtn>
          <WinBtn $close><svg width="12" height="10"><path d="M2 1l8 8M10 1L2 9" stroke="#fff" strokeWidth="2.400" /></svg></WinBtn>
        </WinButtons>
      </TitleBar>
      <MenuBar>{MENUS.map(m => <MenuItem key={m}>{m}</MenuItem>)}</MenuBar>

      <ToolbarTrack>
        <Toolbar $width={880} $h={32} $top>
          <Tools list="new open save" /><Sep />
          <T n="cross" />
          <Combo><ComboMain><Ico n="boxx" /></ComboMain><ComboDrop><Arrow /></ComboDrop></Combo>
          <Sep $w={4} />
          <Tools list="undo redo" /><Sep $w={7} />
          <Tools list="del cut copy paste" /><Sep $w={6} />
          <T n="cube" /><DropCell $w={18}><Arrow /></DropCell>
          <T n="ccube" /><DropCell $w={16}><Arrow /></DropCell>
          <Sep $w={6} />
          <Tools list="sh1 sh2" /><Sep $w={3} /><Gap $w={58} /><Grip />
          <Tools list="pt line arc curve poly circle oval rect star octa" />
        </Toolbar>
        <Toolbar $width={945} $h={32} $top $bottom>
          <Tools list="zwin zmin zplus zhatch eye zprev" /><Sep />
          <Tools list="move zfit rot" /><Sep $w={3} /><Gap $w={28} /><Grip />
          <Tools list="trim ext fillet chamfer corner offcurve slot frame g1 g2 g3" /><Sep $w={3} /><Gap $w={35} /><Grip />
          <Tools list="bulbG bulbY bulbC bulbs arrL arrR" /><Sep $w={7} />
          <Tools list="book layers funnel" />
        </Toolbar>
        <Toolbar $width={674} $h={31} $pad={6}>
          <Tools list="r1 r2 r3 r4 r5 r6 r7 r8 r9 r10 r11 r12 r13 sh1 sh2" /><Sep $w={3} /><Gap $w={48} /><Grip />
          <Tools list="dim1 dim2 dim3 dim4 dim5 dim6" />
        </Toolbar>
      </ToolbarTrack>

      <Workspace>
        <LeftStrip>
          <LeftTools>
            <LeftTool $on><Ico n="selQ" /></LeftTool>
            <LeftTool><Ico n="node" /></LeftTool>
            <LeftTool><Ico n="abc" /></LeftTool>
            <LeftTool><Ico n="shape" /></LeftTool>
            <LeftTool><Ico n="node2" /></LeftTool>
            <LeftTool><Ico n="eraser" /></LeftTool>
          </LeftTools>
        </LeftStrip>
        <ViewGrid>
          <HRulerCell><HRuler /></HRulerCell>
          <VRulerCell><VRuler /></VRulerCell>
          <Canvas><Scene /></Canvas>
          <VScroll>
            <ScrollCap $h={25}><UpArrow /></ScrollCap>
            <ThumbTrack />
            <Thumb><ThumbGrip /></Thumb>
            <ScrollCap $h={17}><Arrow $c="#333" /></ScrollCap>
          </VScroll>
          <HScroll><LeftArrow /><RightArrow /></HScroll>
        </ViewGrid>
        <Panel>
          <PanelHead>
            <PanelGrip />
            <MiniBtn $ml={8}><svg width="7" height="7"><rect x="0.500" y="0.500" width="6" height="6" fill="none" stroke="#111" strokeWidth="1.300" /></svg></MiniBtn>
            <MiniBtn $ml={2}><svg width="7" height="7"><path d="M0 0l7 7M7 0L0 7" stroke="#111" strokeWidth="1.300" /></svg></MiniBtn>
          </PanelHead>
          <TabRow><Tab><Ico n="selT" s={16} /></Tab></TabRow>
          <FieldList>
            <Field><FieldLabel>微调距离:</FieldLabel><FieldInput>200.000</FieldInput></Field>
            <Field><FieldLabel>微调角度:</FieldLabel><FieldInput>90.000</FieldInput></Field>
          </FieldList>
          <BtnGrid>
            <BtnLabel k="Q" t="选择" on /><BtnLabel k="R" t="加锁" />
            <BtnLabel k="W" t="显示" /><BtnLabel k="T" t="顺序" />
            <BtnLabel k="E" t="图层" /><BtnLabel k="Y" t="对齐" />
          </BtnGrid>
          <PanelRule />
        </Panel>
        <Palette>
          <PalTool $h={18} $bg="#c4c4c4"><Ico n="pen" s={18} /></PalTool>
          <PalTool><Ico n="boxx" s={24} /></PalTool>
          <PalTool $bg="#d0d0d0"><Ico n="dropper" s={18} /></PalTool>
          <PalTool><Ico n="pattern" s={20} /></PalTool>
          <Swatch $c="#f6b8cc" />
          <PalTool $bg="#f4f4f4"><UpArrow /></PalTool>
          <PalTool $bg="#fafafa"><Arrow $c="#222" /></PalTool>
          {COLORS.map((c, i) => <Swatch key={i} $c={c} />)}
        </Palette>
      </Workspace>

      <BottomBar>
        <T n="endp" on /><T n="mid" /><T n="near" on /><T n="inter" on /><T n="quad" on /><T n="circ" on /><T n="perp" /><T n="tan" /><Sep />
        <T n="dot" on /><T n="axes" on /><Sep />
        <Tools list="dia1 dia2 dia3" /><Sep $w={7} />
        <Tools list="stk1 stk2" /><Sep $w={6} />
        <Tools list="ptr1 ptr2" /><Sep />
        <Tools list="pl1 pl2 pl3 xr" /><Sep />
      </BottomBar>
      <StatusBar>
        <StatusText>选择工具：没有选中对象</StatusText>
        <Coords>132.95 207.46 0.00</Coords>
        <UBtn>U</UBtn>
      </StatusBar>
    </Page>
  );
}
